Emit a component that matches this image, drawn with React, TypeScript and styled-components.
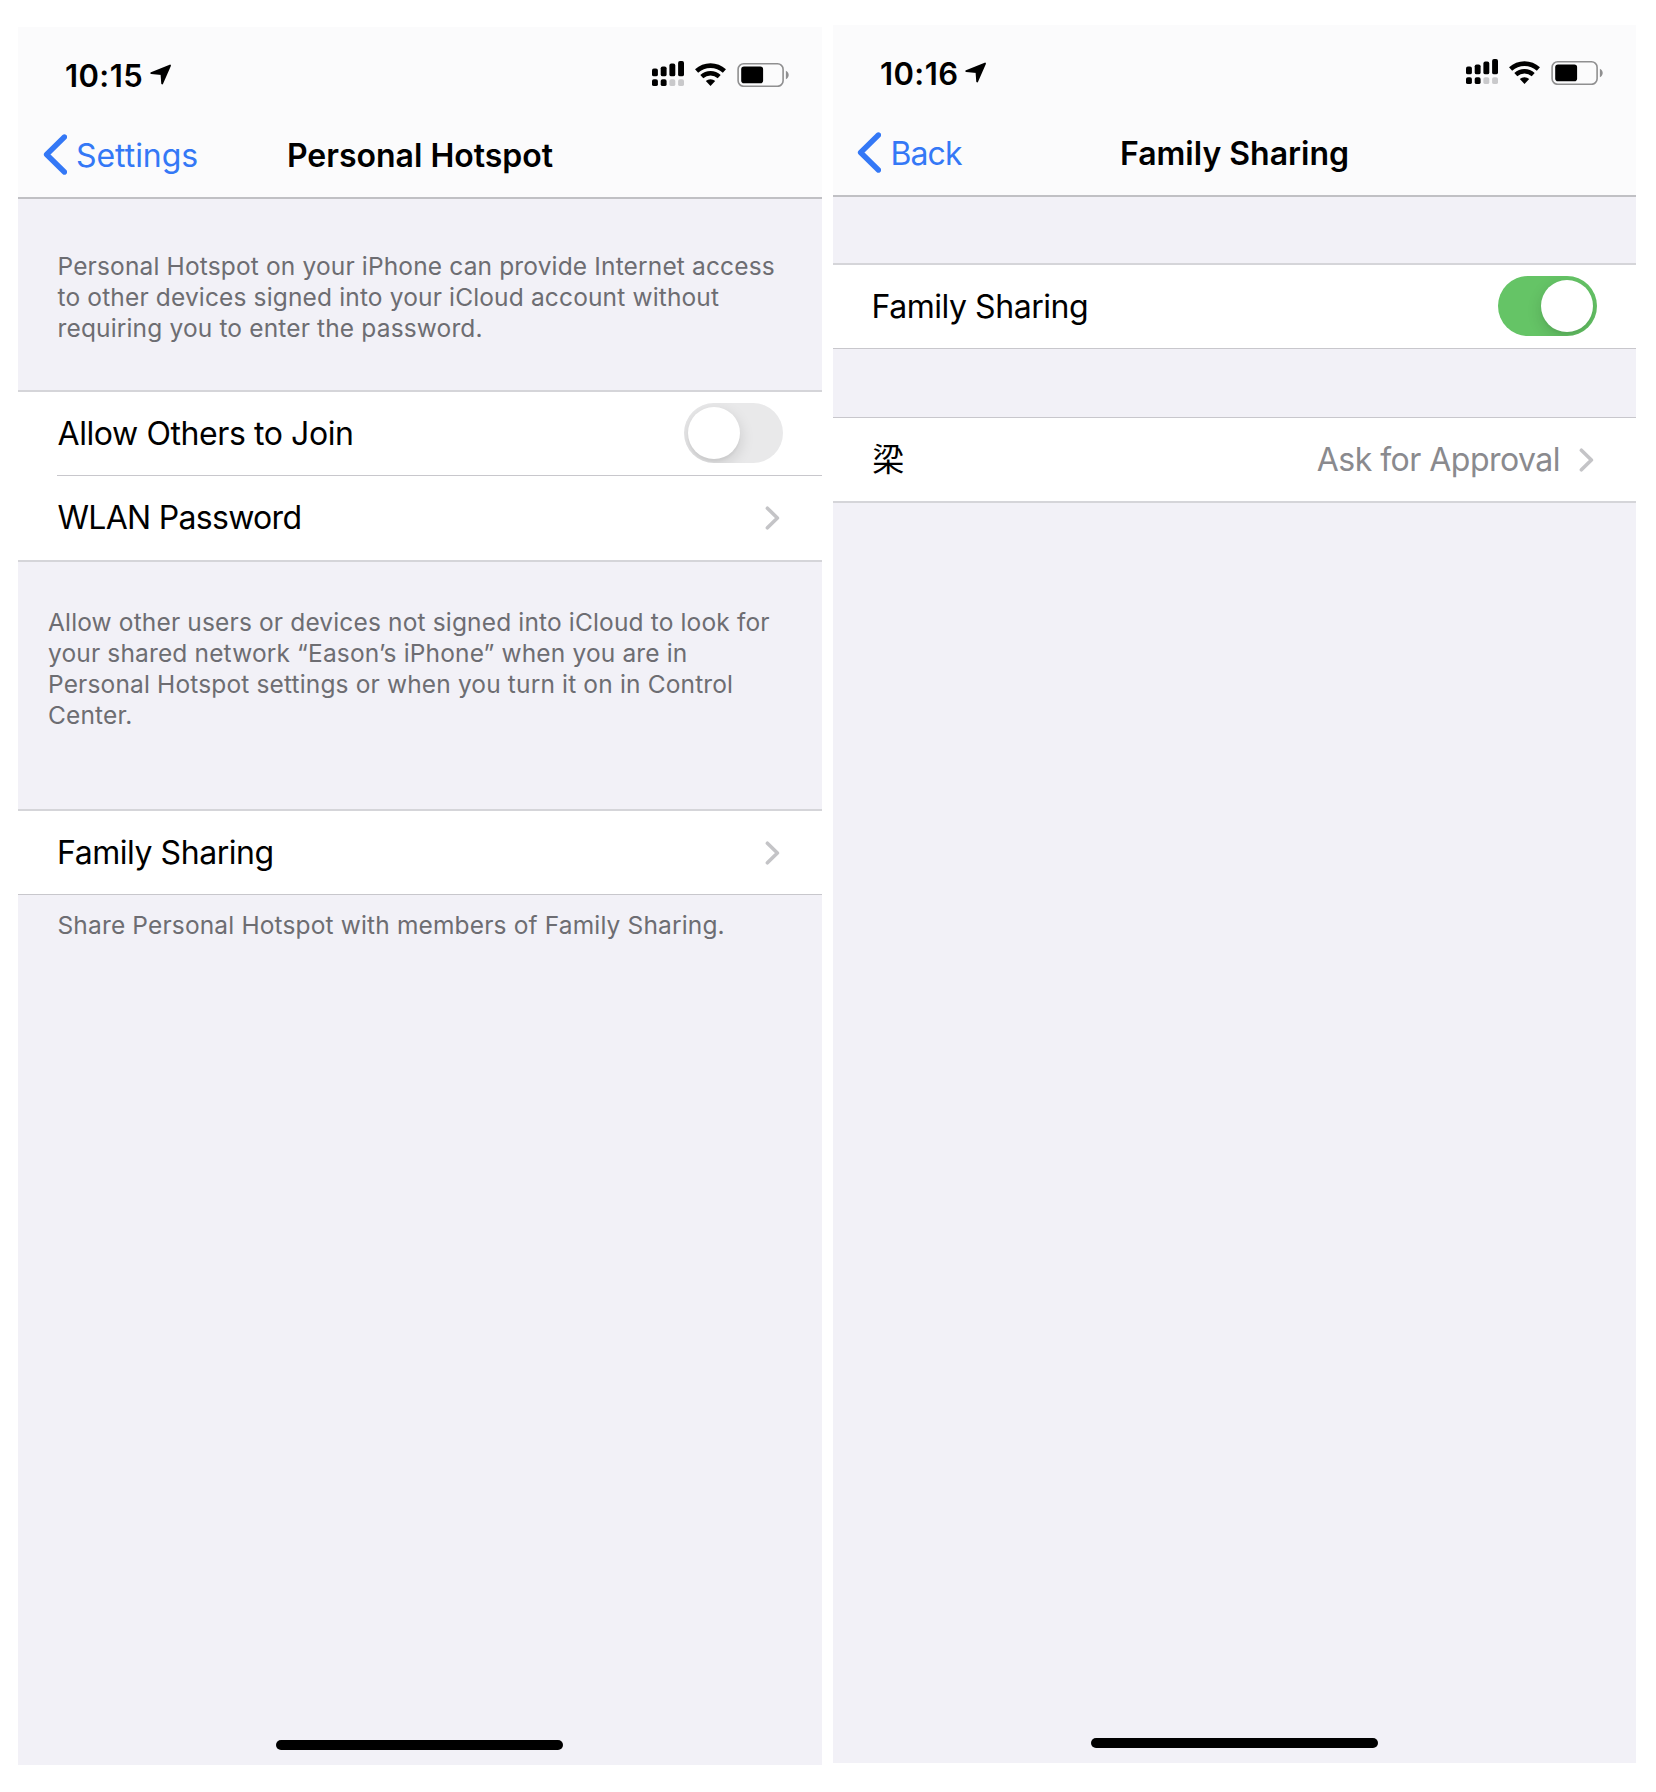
import React from "react";
import styled, { createGlobalStyle } from "styled-components";

const GlobalStyle = createGlobalStyle`
  * { box-sizing: border-box; }
  body {
    margin: 0;
    background: #ffffff;
    color: #000000;
    font-family: Inter, "Noto Sans CJK SC", sans-serif;
  }
`;

const Page = styled.main`
  display: flex;
  align-items: flex-start;
  gap: 11px;
  width: 1656px;
  height: 1792px;
  padding: 25px 20px 0 18px;
  overflow: hidden;
`;

const Phone = styled.section<{ $width: number; $drop?: number }>`
  display: flex;
  flex-direction: column;
  flex: none;
  width: ${(p) => p.$width}px;
  height: 1738px;
  margin-top: ${(p) => p.$drop ?? 0}px;
  background: #f2f1f7;
`;

const Header = styled.header`
  height: 172px;
  background: #fbfbfc;
  border-bottom: 2px solid #c0c0c4;
`;

const StatusBar = styled.div`
  display: flex;
  align-items: center;
  justify-content: space-between;
  height: 94px;
  padding: 0 33px 0 47px;
`;

const Clock = styled.div<{ $track: number }>`
  display: flex;
  align-items: center;
  gap: 7px;
  font-size: 31px;
  font-weight: 600;
  line-height: 38px;
  letter-spacing: ${(p) => p.$track}px;
`;

const ClockText = styled.time`
  padding-top: 3px;
`;

const StatusIcons = styled.div`
  display: flex;
  align-items: center;
  gap: 11px;
`;

const NavBar = styled.nav`
  display: grid;
  grid-template-columns: 1fr auto 1fr;
  align-items: center;
  height: 68px;
`;

const BackLink = styled.a<{ $track: number; $inset: number }>`
  display: flex;
  align-items: center;
  gap: 9px;
  padding-left: ${(p) => p.$inset}px;
  color: #3478f6;
  font-size: 32px;
  line-height: 40px;
  letter-spacing: ${(p) => p.$track}px;
`;

const BackText = styled.span`
  padding-top: 2px;
`;

const Title = styled.h1`
  margin: 0;
  padding-top: 2px;
  font-size: 32px;
  font-weight: 600;
  line-height: 40px;
`;

const Group = styled.div<{ $top: number; $bottom: number }>`
  background: #ffffff;
  border-top: ${(p) => p.$top}px solid ${(p) => (p.$top > 1 ? "#d5d5d9" : "#c8c7cc")};
  border-bottom: ${(p) => p.$bottom}px solid ${(p) => (p.$bottom > 1 ? "#d5d5d9" : "#c8c7cc")};
`;

const Row = styled.div<{ $height?: number }>`
  display: flex;
  align-items: center;
  height: ${(p) => p.$height ?? 83}px;
  padding: 0 39px 0 40px;
`;

const Divider = styled.div`
  height: 1px;
  margin-left: 39px;
  background: #c8c7cc;
`;

const Label = styled.span<{ $track?: number; $nudge?: number }>`
  flex: 1;
  margin-left: ${(p) => p.$nudge ?? 0}px;
  font-size: 32px;
  line-height: 40px;
  letter-spacing: ${(p) => p.$track ?? 0}px;
`;

const Value = styled.span`
  margin-right: 19px;
  color: #8a8a8e;
  font-size: 32px;
  line-height: 40px;
  letter-spacing: -0.52px;
`;

const Note = styled.div<{ $height?: number; $top: number; $left: number }>`
  height: ${(p) => (p.$height ? `${p.$height}px` : "auto")};
  padding: ${(p) => p.$top}px 0 0 ${(p) => p.$left}px;
  color: #6d6d72;
  font-size: 24.5px;
  line-height: 31px;
  letter-spacing: 0.15px;
  white-space: nowrap;
`;

const Spacer = styled.div<{ $height: number }>`
  height: ${(p) => p.$height}px;
`;

const Track = styled.span<{ $on?: boolean }>`
  display: flex;
  align-items: center;
  justify-content: ${(p) => (p.$on ? "flex-end" : "flex-start")};
  width: 99px;
  height: 60px;
  margin-bottom: 1px;
  padding: 4px;
  border-radius: 30px;
  overflow: hidden;
  background: ${(p) => (p.$on ? "#65c466" : "#e9e9ea")};
`;

const Knob = styled.span`
  width: 52px;
  height: 52px;
  border-radius: 50%;
  background: #ffffff;
  box-shadow: 0 5px 15px rgba(0, 0, 0, 0.14), 0 3px 2px rgba(0, 0, 0, 0.03);
`;

const HomeIndicator = styled.div`
  width: 287px;
  height: 10px;
  margin: auto 0 15px 258px;
  border-radius: 5px;
  background: #000000;
`;

const RowChevron = styled.svg`
  display: block;
  flex: none;
  margin-right: 3px;
`;

function Disclosure() {
  return (
    <RowChevron width="15" height="24" viewBox="0 0 15 24" fill="none">
      <path d="M2.4 2.2L12.4 12L2.4 21.8" stroke="#c4c4c7" strokeWidth="3.6" strokeLinecap="round" strokeLinejoin="round" />
    </RowChevron>
  );
}

function BackChevron() {
  return (
    <svg width="24" height="42" viewBox="0 0 24 42" fill="none">
      <path d="M21.4 3L3.6 20.5L21.4 38" stroke="#3478f6" strokeWidth="5.4" strokeLinecap="round" strokeLinejoin="round" />
    </svg>
  );
}

function LocationArrow() {
  return (
    <svg width="21" height="21" viewBox="0 0 21 21">
      <path d="M1.3 9.1L20 1.6L12.2 19.4L11.5 10Z" fill="#000" stroke="#000" strokeWidth="1.9" strokeLinejoin="round" />
    </svg>
  );
}

const signalBars = [
  { x: 0, top: 7.6, active: true },
  { x: 8.7, top: 5.4, active: true },
  { x: 17.4, top: 2.6, active: false },
  { x: 26.1, top: 0, active: false },
];

function Signal() {
  return (
    <svg width="32" height="26" viewBox="0 0 32 26">
      {signalBars.map((b) => (
        <React.Fragment key={b.x}>
          <rect x={b.x} y={b.top} width="5.9" height={15.3 - b.top} rx="1.9" />
          <rect x={b.x} y="18.2" width="5.9" height="6.9" rx="1.9" fill={b.active ? "#000" : "#c9c9cb"} />
        </React.Fragment>
      ))}
    </svg>
  );
}

function Wifi() {
  return (
    <svg width="31" height="26" viewBox="0 0 31 26" fill="none">
      <path d="M1.6 10A20.6 20.6 0 0 1 29.4 10" stroke="#000" strokeWidth="4.6" />
      <path d="M6.8 15.7A12.9 12.9 0 0 1 24.2 15.7" stroke="#000" strokeWidth="4.4" />
      <path d="M15.5 25L10.8 20.1A6.8 6.8 0 0 1 20.2 20.1Z" fill="#000" />
    </svg>
  );
}

function Battery() {
  return (
    <svg width="52" height="26" viewBox="0 0 52 26" fill="none">
      <rect x="1.1" y="2.7" width="45" height="22.6" rx="5.6" stroke="#8f8f90" strokeWidth="1.6" />
      <rect x="4.2" y="5.6" width="21.9" height="16.6" rx="2.8" fill="#000" />
      <path d="M48.9 9.8C50.6 10.7 51.7 12.2 51.7 14C51.7 15.8 50.6 17.3 48.9 18.2Z" fill="#8f8f90" />
    </svg>
  );
}

function Switch({ on }: { on?: boolean }) {
  return (
    <Track $on={on} role="switch" aria-checked={!!on}>
      <Knob />
    </Track>
  );
}

interface TopProps {
  time: string;
  timeTrack: number;
  back: string;
  backTrack: number;
  backInset: number;
  title: string;
}

function Top({ time, timeTrack, back, backTrack, backInset, title }: TopProps) {
  return (
    <Header>
      <StatusBar>
        <Clock $track={timeTrack}>
          <ClockText>{time}</ClockText>
          <LocationArrow />
        </Clock>
        <StatusIcons>
          <Signal />
          <Wifi />
          <Battery />
        </StatusIcons>
      </StatusBar>
      <NavBar>
        <BackLink $track={backTrack} $inset={backInset}>
          <BackChevron />
          <BackText>{back}</BackText>
        </BackLink>
        <Title>{title}</Title>
      </NavBar>
    </Header>
  );
}

export default function App() {
  return (
    <>
      <GlobalStyle />
      <Page>
        <Phone $width={804} $drop={2}>
          <Top time="10:15" timeTrack={0.4} back="Settings" backTrack={-0.05} backInset={25} title="Personal Hotspot" />
          <Note $height={191} $top={52} $left={39.5}>
            Personal Hotspot on your iPhone can provide Internet access
            <br />
            to other devices signed into your iCloud account without
            <br />
            requiring you to enter the password.
          </Note>
          <Group $top={2} $bottom={2}>
            <Row>
              <Label $track={-0.41} $nudge={-0.5}>Allow Others to Join</Label>
              <Switch />
            </Row>
            <Divider />
            <Row $height={84}>
              <Label $track={-0.7} $nudge={-0.5}>WLAN Password</Label>
              <Disclosure />
            </Row>
          </Group>
          <Note $height={247} $top={45} $left={30}>
            Allow other users or devices not signed into iCloud to look for
            <br />
            your shared network “Eason’s iPhone” when you are in
            <br />
            Personal Hotspot settings or when you turn it on in Control
            <br />
            Center.
          </Note>
          <Group $top={2} $bottom={1}>
            <Row>
              <Label $track={-0.45} $nudge={-1}>Family Sharing</Label>
              <Disclosure />
            </Row>
          </Group>
          <Note $top={15} $left={39.5}>Share Personal Hotspot with members of Family Sharing.</Note>
          <HomeIndicator />
        </Phone>

        <Phone $width={803}>
          <Top time="10:16" timeTrack={0.4} back="Back" backTrack={-0.9} backInset={24.4} title="Family Sharing" />
          <Spacer $height={66} />
          <Group $top={2} $bottom={1}>
            <Row>
              <Label $track={-0.45} $nudge={-1.5}>Family Sharing</Label>
              <Switch on />
            </Row>
          </Group>
          <Spacer $height={68} />
          <Group $top={1} $bottom={2}>
            <Row>
              <Label lang="zh-CN" $nudge={-0.8}>梁</Label>
              <Value>Ask for Approval</Value>
              <Disclosure />
            </Row>
          </Group>
          <HomeIndicator />
        </Phone>
      </Page>
    </>
  );
}
